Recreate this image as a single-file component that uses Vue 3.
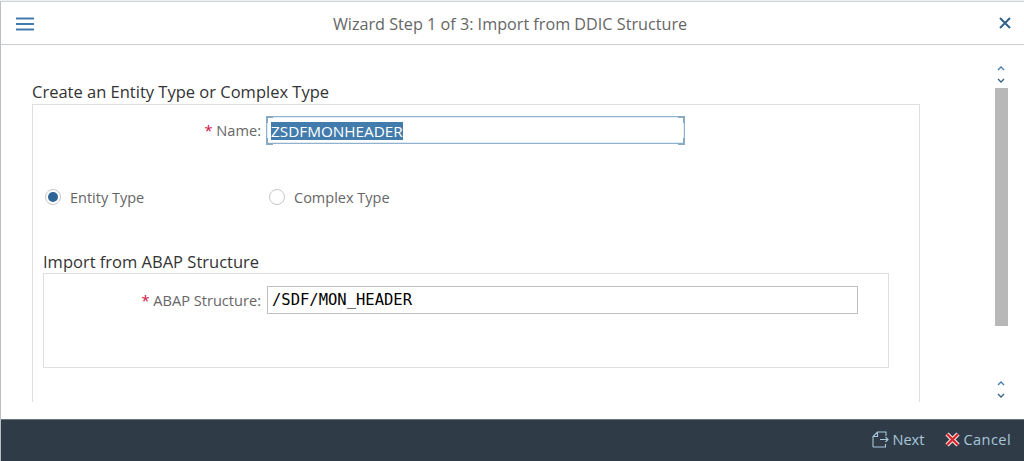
<script setup>
const ticks = [18, 76, 80, 110, 115, 150, 190, 235, 240, 245, 320, 345, 350, 355, 420, 470, 600]
</script>

<template>
  <div class="page">
    <div class="ticks">
      <i v-for="t in ticks" :key="t" :style="{ marginLeft: t + 'px' }"></i>
    </div>
    <div class="dialog">
      <header class="head">
        <svg class="menu" width="18" height="14" viewBox="0 0 18 14">
          <path d="M0 1.500h18M0 7h18M0 12.500h18" stroke="#427cac" stroke-width="2.200" fill="none" />
        </svg>
        <h1 class="title">Wizard Step 1 of 3: Import from DDIC Structure</h1>
        <svg class="close" width="14" height="14" viewBox="0 0 14 14">
          <path d="M2 2l10 10M12 2L2 12" stroke="#346187" stroke-width="2" fill="none" />
        </svg>
      </header>

      <main class="body">
        <section class="content">
          <h2 class="group-title">Create an Entity Type or Complex Type</h2>
          <div class="group">
            <div class="row name-row">
              <label class="label"><span class="req">*</span> Name:</label>
              <div class="name-input">
                <span class="sel">ZSDFMONHEADER</span>
                <i class="h tl"></i><i class="h tr"></i><i class="h bl"></i><i class="h br"></i>
              </div>
            </div>
            <div class="radios">
              <div class="radio">
                <span class="dot on"></span>
                <span>Entity Type</span>
              </div>
              <div class="radio">
                <span class="dot"></span>
                <span>Complex Type</span>
              </div>
            </div>
            <h3 class="sub-title">Import from ABAP Structure</h3>
            <div class="sub-group">
              <label class="label abap"><span class="req">*</span> ABAP Structure:</label>
              <div class="abap-input">/SDF/MON_HEADER</div>
            </div>
          </div>
        </section>

        <aside class="scroll">
          <div class="arrows">
            <svg width="8" height="20" viewBox="0 0 8 20">
              <path d="M1 6l3-3 3 3" stroke="#427cac" stroke-width="1.300" fill="none" />
              <path d="M1 15l3 3 3-3" stroke="#346187" stroke-width="1.300" fill="none" />
            </svg>
          </div>
          <div class="thumb"></div>
          <div class="arrows low">
            <svg width="8" height="20" viewBox="0 0 8 20">
              <path d="M1 6l3-3 3 3" stroke="#427cac" stroke-width="1.300" fill="none" />
              <path d="M1 15l3 3 3-3" stroke="#346187" stroke-width="1.300" fill="none" />
            </svg>
          </div>
        </aside>
      </main>

      <footer class="foot">
        <button class="btn">
          <svg width="17" height="17" viewBox="0 0 17 17" fill="none" stroke="#a9c6da" stroke-width="1.100">
            <path d="M1 16V5.500L5.500 1H14V5M1 16H13.500V13M1 5.500H5.500V1" />
            <path d="M8 8.500H16M13.500 6L16 8.500L13.500 11" />
          </svg>
          Next
        </button>
        <button class="btn cancel">
          <svg width="15" height="15" viewBox="0 0 15 15" fill="none">
            <path d="M2 2l11 11M13 2L2 13" stroke="#f2e6e6" stroke-width="4.500" />
            <path d="M2 2l11 11M13 2L2 13" stroke="#d8262c" stroke-width="2.400" />
          </svg>
          Cancel
        </button>
      </footer>
    </div>
  </div>
</template>

<style>
html, body { margin: 0; background: #fff; }
</style>

<style scoped>
.page {
  width: 1024px;
  height: 461px;
  overflow: hidden;
  display: flex;
  flex-direction: column;
  font-family: "Open Sans", "Noto Sans", sans-serif;
  background: #fff;
}
.ticks {
  height: 1px;
  display: flex;
  background: #eef1f4;
  flex: none;
}
.ticks i { width: 2px; height: 1px; background: #a9b7c4; }
.dialog {
  flex: 1;
  display: flex;
  flex-direction: column;
  border-left: 1px solid #b9bfc4;
  border-top: 1px solid #cfd4d8;
  min-height: 0;
}
.head {
  flex: none;
  height: 42px;
  display: flex;
  align-items: center;
  border-bottom: 1px solid #c9cccf;
  padding: 0 12px 0 15px;
}
.menu { margin-top: 1px; flex: none; }
.title {
  flex: 1;
  margin: 0 0 0 -12px;
  padding-top: 2px;
  text-align: center;
  font-size: 16.200px;
  font-weight: 400;
  color: #666;
}
.close { flex: none; }
.body { flex: 1; display: flex; min-height: 0; }
.content { width: 918px; flex: none; padding: 37px 0 0 31px; box-sizing: border-box; }
.group-title {
  margin: 0;
  font-size: 16.500px;
  line-height: 20px;
  font-weight: 400;
  color: #333;
}
.group {
  margin-top: 2px;
  width: 888px;
  height: 298px;
  box-sizing: border-box;
  border: 1px solid #dfdfdf;
  border-bottom: 0;
  padding: 11px 0 0 10px;
}
.row { display: flex; align-items: center; }
.label {
  font-size: 14.600px;
  color: #666;
  text-align: right;
  flex: none;
}
.name-row .label { width: 218px; margin-right: 5px; }
.req { color: #d0103a; }
.name-input {
  position: relative;
  width: 419px;
  height: 28px;
  box-sizing: border-box;
  border: 1px solid #8fb3cf;
  padding: 4px;
  line-height: 20px;
  font-size: 15.300px;
  outline: 1px solid #e3ecf3;
  outline-offset: -2px;
}
.sel { background: #427cac; color: #fff; display: inline-block; line-height: 18px; }
.h {
  position: absolute;
  width: 5px;
  height: 5px;
  border: 0 solid #8aa9c2;
}
.tl { left: -1px; top: -1px; border-width: 2px 0 0 2px; }
.tr { right: -1px; top: -1px; border-width: 2px 2px 0 0; }
.bl { left: -1px; bottom: -2px; border-width: 0 0 2px 2px; }
.br { right: -1px; bottom: -2px; border-width: 0 2px 2px 0; }
.radios { display: flex; margin-top: 43px; height: 20px; align-items: center; padding-left: 2px; }
.radio {
  display: flex;
  align-items: center;
  gap: 9px;
  width: 224px;
  font-size: 14.500px;
  color: #666;
}
.dot {
  width: 16px;
  height: 16px;
  border-radius: 50%;
  border: 1px solid #c4c7ca;
  box-sizing: border-box;
  background: #fff;
  flex: none;
  position: relative;
}
.dot.on::after {
  content: "";
  position: absolute;
  inset: 2px;
  border-radius: 50%;
  background: #2f6497;
}
.sub-title {
  margin: 45px 0 0;
  font-size: 16.500px;
  line-height: 20px;
  font-weight: 400;
  color: #333;
}
.sub-group {
  width: 846px;
  height: 95px;
  box-sizing: border-box;
  border: 1px solid #dfdfdf;
  margin-top: 1px;
  padding-top: 12px;
  display: flex;
  align-items: flex-start;
}
.abap { width: 217px; line-height: 28px; margin-right: 6px; }
.abap-input {
  width: 591px;
  height: 28px;
  box-sizing: border-box;
  border: 1px solid #bfbfbf;
  padding-left: 4px;
  font-family: "DejaVu Sans Mono", monospace;
  font-size: 15.500px;
  line-height: 26px;
  color: #000;
}
.scroll {
  width: 105px;
  flex: none;
  display: flex;
  flex-direction: column;
  align-items: center;
  padding: 19px 0 0 59px;
  box-sizing: border-box;
}
.arrows { height: 24px; display: flex; flex: none; }
.low { margin-top: 53px; }
.thumb { width: 13px; height: 238px; background: #b8b8b8; flex: none; }
.foot {
  flex: none;
  height: 42px;
  background: #2f3c48;
  border-top: 1px solid #6d757c;
  display: flex;
  justify-content: flex-end;
  align-items: center;
  gap: 21px;
  padding: 0 13px 3px 0;
  box-sizing: border-box;
}
.btn {
  background: none;
  border: 0;
  padding: 0;
  display: flex;
  align-items: center;
  gap: 3px;
  font: inherit;
  font-size: 14.600px;
  color: #a9c6da;
}
.cancel { letter-spacing: 0.400px; }
</style>
